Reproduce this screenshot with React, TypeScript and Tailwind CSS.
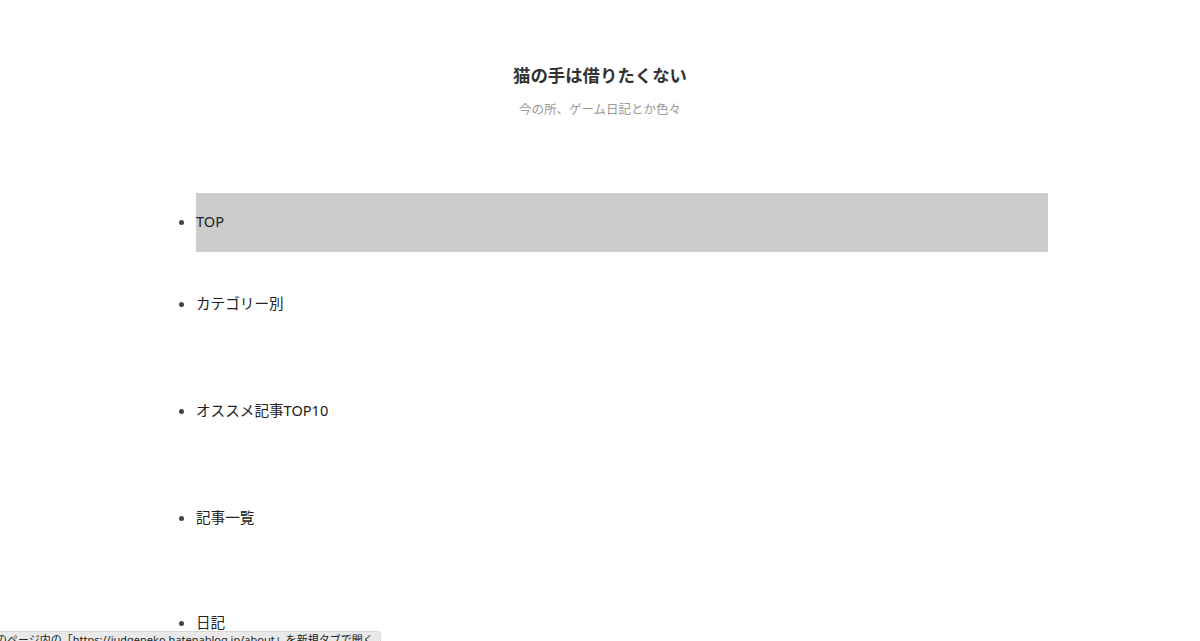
const items = [
  { label: "TOP", active: true },
  { label: "カテゴリー別" },
  { label: "オススメ記事TOP10" },
  { label: "記事一覧" },
  { label: "日記" },
]

export default function App() {
  return (
    <div
      className="relative h-[641px] overflow-hidden bg-white text-[#222]"
      style={{ fontFamily: '"Noto Sans", "Noto Sans CJK JP", sans-serif' }}
    >
      <header className="pt-[62px] text-center">
        <h1 className="text-[17.4px] font-bold leading-[26px] text-[#333]">猫の手は借りたくない</h1>
        <p className="mt-[13px] text-[12.5px] leading-[18px] text-[#999]">今の所、ゲーム日記とか色々</p>
      </header>

      <nav className="mx-auto mt-[74px] w-[892px] translate-x-[2px]">
        <ul className="list-disc pl-10 text-[14.6px] leading-[22px] marker:text-[#444]">
          {items.map((item, i) => (
            <li
              key={item.label}
              className={i === 0 ? "" : i === 1 ? "mt-[40px]" : i === 4 ? "mt-[83px]" : "mt-[85px]"}
            >
              {item.active ? (
                <a className="block bg-[#ccc] pt-[17px] pb-[20px]">{item.label}</a>
              ) : (
                <a className="block">{item.label}</a>
              )}
            </li>
          ))}
        </ul>
      </nav>

      <div className="absolute bottom-[-6px] left-0 w-[381px] overflow-hidden rounded-tr-[4px] border-t border-r border-[#d6d6d6] bg-[#e9e9e9] text-[11px] leading-[15px] whitespace-nowrap text-[#222]">
        <span className="-ml-[4px] block">のページ内の「https://judgeneko.hatenablog.jp/about」を新規タブで開く</span>
      </div>
    </div>
  )
}
